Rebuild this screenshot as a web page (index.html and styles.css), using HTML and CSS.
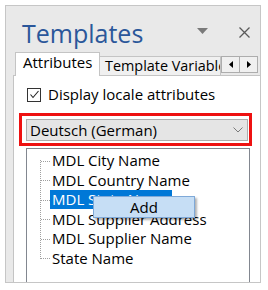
FILE: index.html
```html
<!DOCTYPE html>
<html lang="en">
<head>
    <meta charset="UTF-8">
    <title>Templates</title>
    <link rel="stylesheet" href="styles.css">
</head>
<body>
    <div class="panel">
        <div class="panel-header">
            <h1 class="panel-title">Templates</h1>
            <svg class="icon-menu" width="11" height="6" viewBox="0 0 11 6"><polygon points="0,0 11,0 5.5,6" fill="#7a7a7a"/></svg>
            <svg class="icon-close" width="11" height="11" viewBox="0 0 11 11"><path d="M0.5 0.5 L10.5 10.5 M10.5 0.5 L0.5 10.5" stroke="#5a5a5a" stroke-width="1.3" fill="none"/></svg>
        </div>

        <div class="tab-strip">
            <div class="tab tab-active">Attributes</div>
            <div class="tab tab-inactive">Template Variables</div>
            <div class="tab-scroll">
                <span class="scroll-btn"><svg width="4" height="7" viewBox="0 0 4 7"><polygon points="4,0 0,3.5 4,7" fill="#000"/></svg></span>
                <span class="scroll-btn"><svg width="4" height="7" viewBox="0 0 4 7"><polygon points="0,0 4,3.5 0,7" fill="#000"/></svg></span>
            </div>
        </div>

        <div class="tab-page">
            <label class="check-row">
                <span class="checkbox"><svg width="11" height="11" viewBox="0 0 11 11"><polyline points="1.5,5.5 4,8.5 9.5,2" stroke="#222" stroke-width="1.1" fill="none"/></svg></span>
                Display locale attributes
            </label>

            <!-- red annotation box around the language picker -->
            <div class="highlight-box">
                <div class="combo">
                    <span>Deutsch (German)</span>
                    <svg width="10" height="6" viewBox="0 0 10 6"><polyline points="0.5,0.5 5,5 9.5,0.5" stroke="#7a7a7a" stroke-width="1" fill="none"/></svg>
                </div>
            </div>

            <div class="tree">
                <ul class="tree-list">
                    <li><span class="node">MDL City Name</span></li>
                    <li><span class="node">MDL Country Name</span></li>
                    <li><span class="node node-selected">MDL State Name</span></li>
                    <li><span class="node">MDL Supplier Address</span></li>
                    <li><span class="node">MDL Supplier Name</span></li>
                    <li><span class="node">State Name</span></li>
                </ul>
                <div class="context-menu">Add</div>
            </div>
        </div>
    </div>
</body>
</html>
```

FILE: styles.css
```css
/* Page */
body {
    margin: 0;
    background: #ffffff;
    font-family: 'Open Sans', 'Noto Sans', sans-serif;
    font-size: 15px;
    color: #000;
}

/* Docked task pane */
.panel {
    box-sizing: border-box;
    width: 256px;
    height: 278px;
    margin: 5px 0 0 5px;
    border: 1px solid #c6c6c6;
    background: #e9e9e9;
    display: flex;
    flex-direction: column;
    overflow: hidden;
}

.panel-header {
    box-sizing: border-box;
    height: 46px;
    padding: 10px 10px 0 16px;
    display: flex;
    align-items: flex-start;
}

.panel-title {
    margin: 0;
    font-size: 25px;
    font-weight: 400;
    line-height: normal;
    color: #2b579a;
}

.icon-menu {
    margin: 12px 0 0 auto;
}

.icon-close {
    margin: 11px 0 0 31px;
}

/* Tabs */
.tab-strip {
    display: flex;
    align-items: flex-start;
    height: 24px;
    margin-bottom: -1px;
    padding-left: 9px;
}

.tab {
    box-sizing: border-box;
    white-space: nowrap;
    overflow: hidden;
    border: 1px solid #c4c4c4;
    border-bottom: none;
}

.tab-active {
    position: relative;
    width: 85px;
    height: 24px;
    padding: 0 7px;
    line-height: 18px;
    background: #ffffff;
}

.tab-inactive {
    width: 122px;
    height: 20px;
    margin-top: 4px;
    margin-left: -1px;
    padding: 0 5px;
    font-size: 14.4px;
    line-height: 17px;
    background: #f0f0f0;
}

.tab-scroll {
    display: flex;
    margin-top: 4px;
}

.scroll-btn {
    box-sizing: border-box;
    width: 19px;
    height: 17px;
    border: 1px solid #adadad;
    background: #f0f0f0;
    display: flex;
    align-items: center;
    justify-content: center;
}

.scroll-btn + .scroll-btn {
    margin-left: -1px;
}

/* Attributes page */
.tab-page {
    flex: 1;
    margin-left: 7px;
    border-left: 1px solid #c4c4c4;
    border-top: 1px solid #c4c4c4;
    background: #ffffff;
    display: flex;
    flex-direction: column;
}

.check-row {
    display: flex;
    align-items: center;
    gap: 7px;
    height: 19px;
    margin: 9px 0 0 13px;
    line-height: 19px;
}

.checkbox {
    box-sizing: border-box;
    width: 14px;
    height: 14px;
    border: 1px solid #333333;
    display: flex;
    align-items: center;
    justify-content: center;
}

.highlight-box {
    box-sizing: border-box;
    width: 233px;
    margin: 9px 0 0 5px;
    padding: 3px 1px 2px 4px;
    border: 3px solid #ee1111;
}

.combo {
    box-sizing: border-box;
    height: 22px;
    padding: 0 4px 0 3px;
    border: 1px solid #adadad;
    background: #e5e5e5;
    display: flex;
    align-items: center;
    justify-content: space-between;
    line-height: 20px;
}

/* Attribute tree */
.tree {
    position: relative;
    flex: 1;
    width: 224px;
    box-sizing: border-box;
    margin: 2px 0 0 12px;
    border: 1px solid #828790;
    border-bottom: none;
}

.tree-list {
    position: relative;
    list-style: none;
    margin: 0;
    padding: 2px 0 0 23px;
}

.tree-list::before {
    content: "";
    position: absolute;
    left: 13px;
    top: 11px;
    bottom: 10px;
    border-left: 1px dotted #a0a0a0;
}

.tree-list li {
    position: relative;
    height: 19.6px;
    line-height: 19px;
}

.tree-list li::before {
    content: "";
    position: absolute;
    left: -9px;
    top: 9.5px;
    width: 9px;
    border-top: 1px dotted #a0a0a0;
}

.node {
    display: inline-block;
    padding: 0 2px;
    white-space: nowrap;
}

.node-selected {
    background: #0078d7;
    color: #ffffff;
}

.context-menu {
    position: absolute;
    left: 66px;
    top: 47px;
    box-sizing: border-box;
    width: 102px;
    height: 22px;
    border: 1px solid #7fa9d8;
    background: #c6def5;
    box-shadow: 2px 2px 2px rgba(0, 0, 0, 0.3);
    text-align: center;
    line-height: 20px;
}
```
